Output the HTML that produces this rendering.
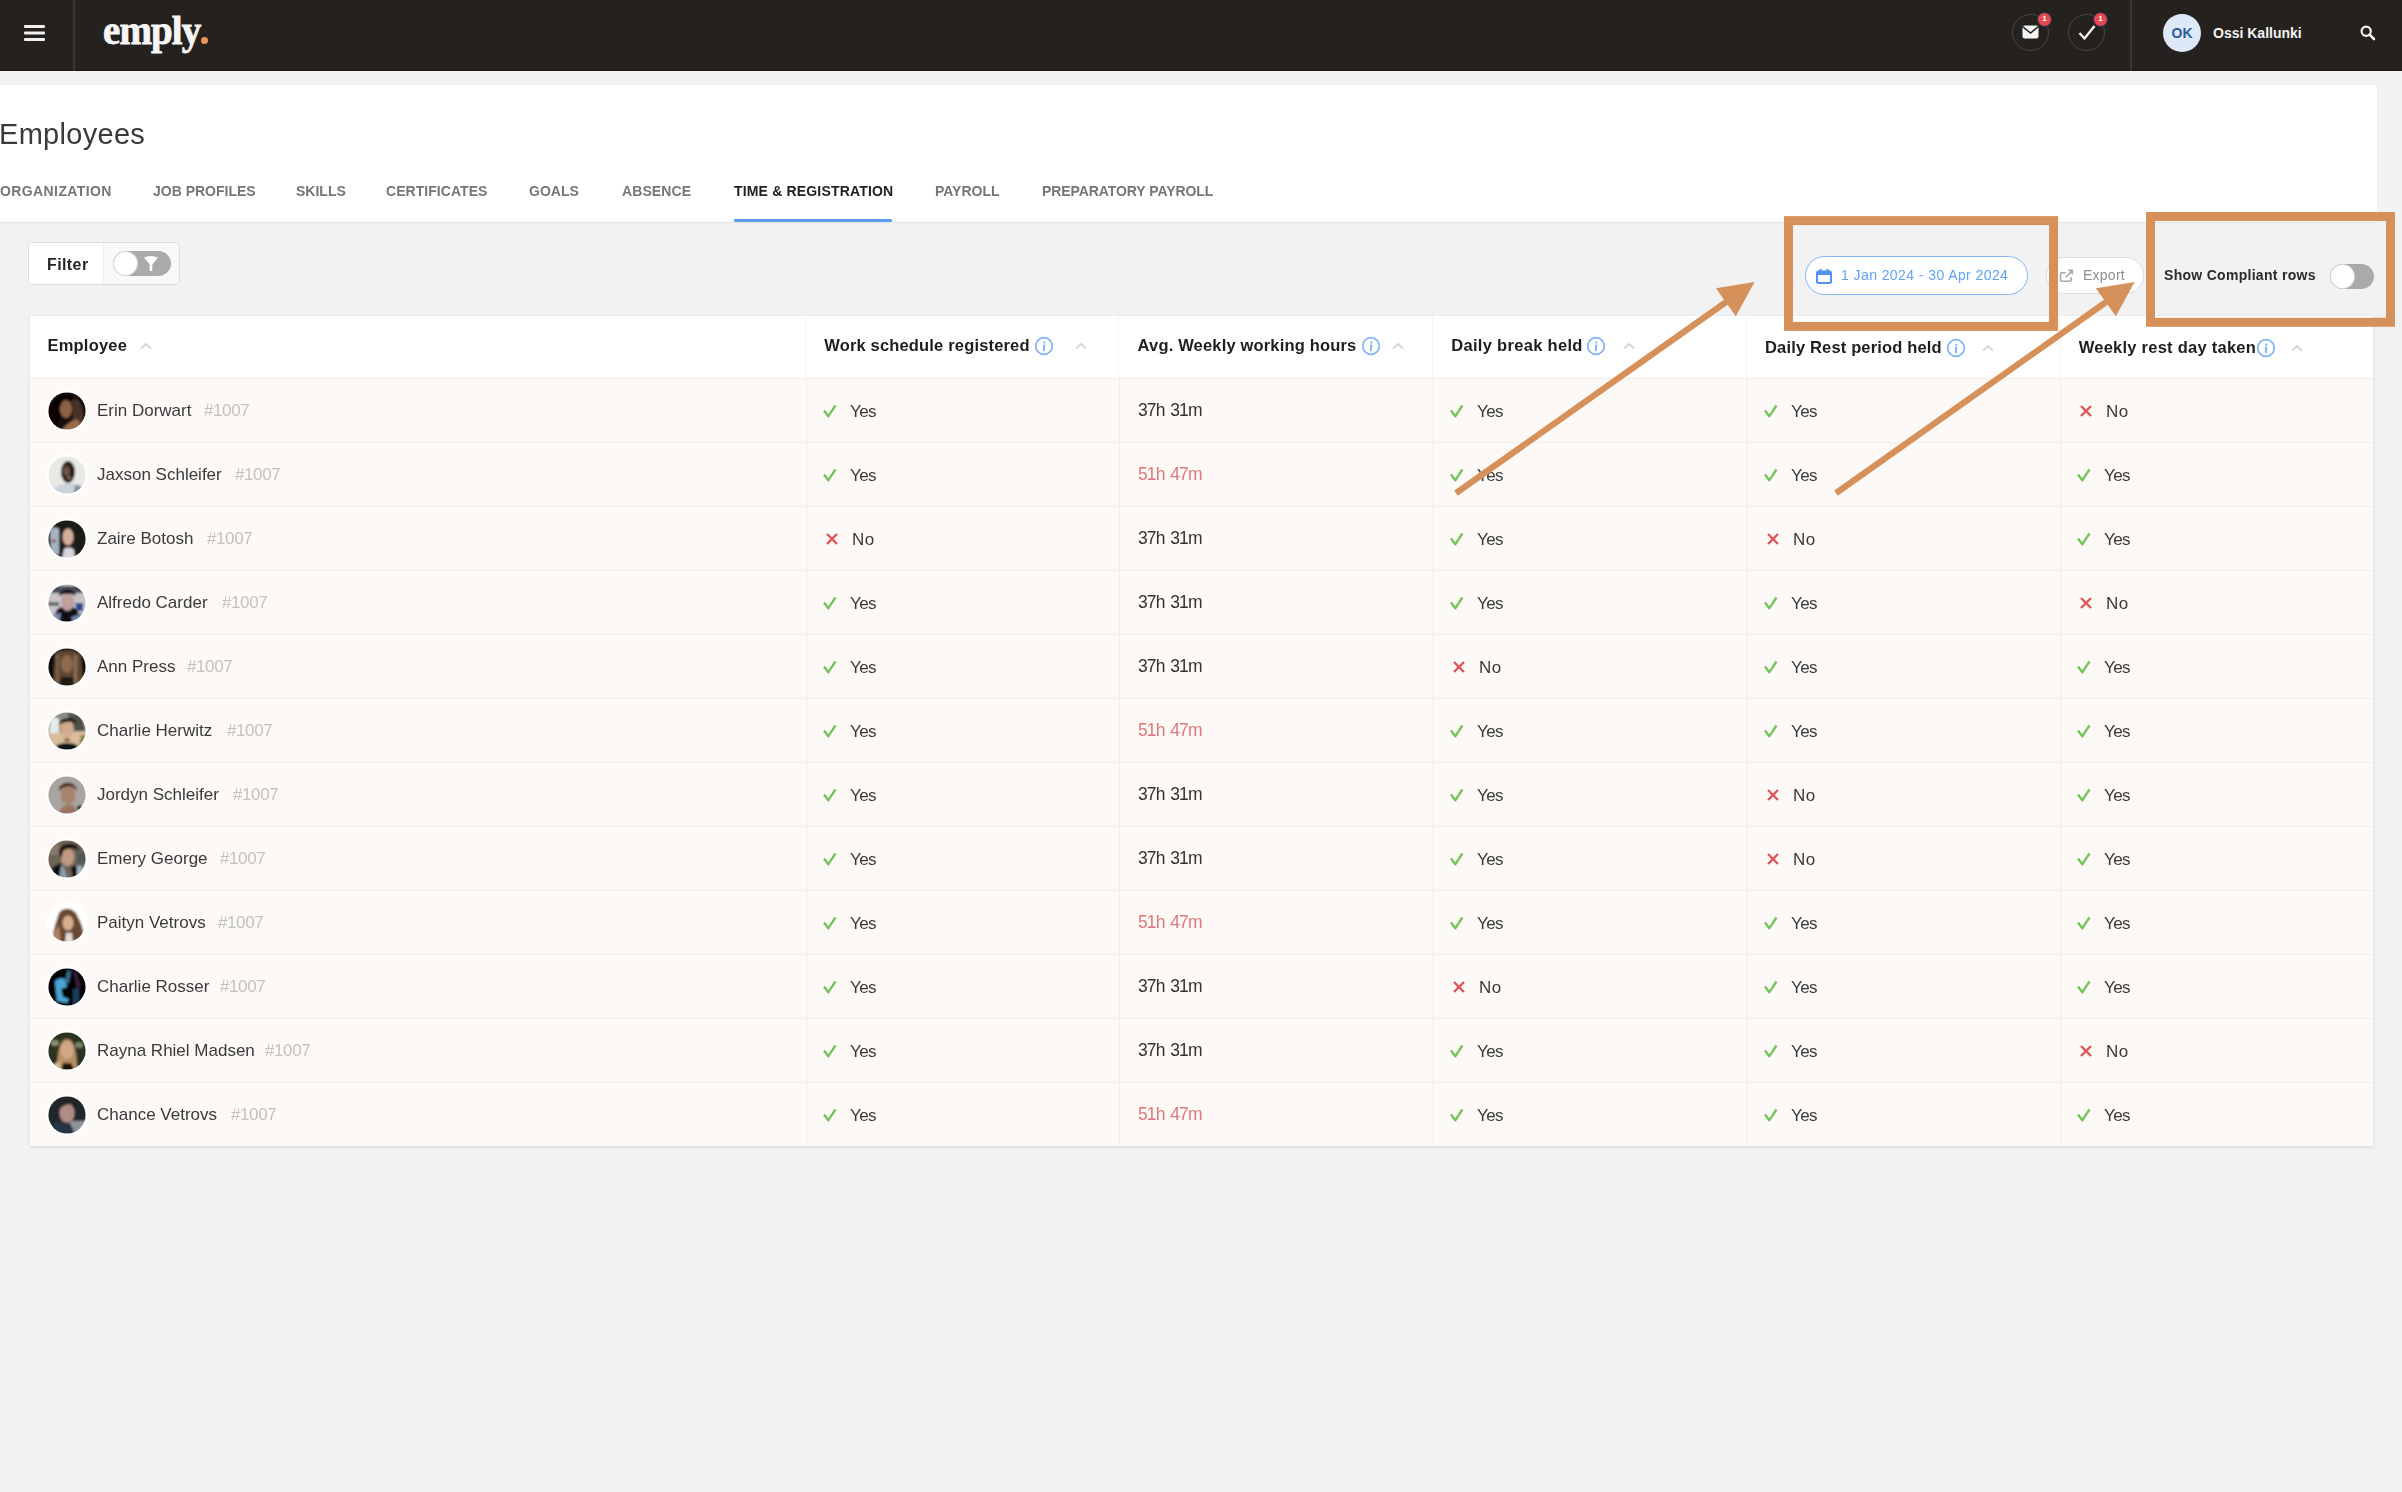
<!DOCTYPE html>
<html><head><meta charset="utf-8"><title>Employees</title>
<style>
*{box-sizing:border-box;margin:0;padding:0}
html,body{width:2402px;height:1492px;overflow:hidden;background:#f2f2f2;font-family:"Liberation Sans",sans-serif;color:#333}
.abs{position:absolute}
#top{position:absolute;left:0;top:0;width:2402px;height:71px;background:#25211e;border-bottom:2px solid #1f1a17}
#panel{position:absolute;left:0;top:84.5px;width:2377px;height:137px;background:#fff;box-shadow:0 1px 1px rgba(0,0,0,.06)}
.title{position:absolute;left:-1px;top:114px;font-size:29px;color:#3a3a3a;line-height:40px;letter-spacing:0.3px}
.tab{position:absolute;top:182px;font-size:14px;font-weight:bold;color:#767676;line-height:18px;white-space:nowrap;transform-origin:0 0}
.tab.act{color:#1f1f1f}
#uline{position:absolute;left:734px;top:218.5px;width:158px;height:3px;background:#5a9cf2;border-radius:1px}
#filter{position:absolute;left:28px;top:242px;width:152px;height:43px;border:1.5px solid #dcdcdc;border-radius:5px;background:#f9f9f9;overflow:hidden}
#filter .l{position:absolute;left:0;top:0;width:75px;height:100%;background:#fff;border-right:1px solid #f0f0f0}
#filter .t{position:absolute;left:18px;top:12px;font-size:16px;font-weight:bold;color:#262626;line-height:20px;letter-spacing:0.4px}
.tog{position:absolute;background:#aaaaaa;border-radius:13px}
.knob{position:absolute;background:#fff;border-radius:50%;box-shadow:0 0 0 1px #d8d8d8}
#date{position:absolute;left:1805px;top:256px;width:223px;height:39px;border:1.8px solid #85b5f4;border-radius:20px;background:#fff}
#date .t{position:absolute;left:35px;top:8.5px;font-size:14px;color:#64a2f1;line-height:18px;white-space:nowrap;letter-spacing:0.42px}
#export{position:absolute;left:2046px;top:256.5px;width:98px;height:37.5px;border:1.5px solid #e0e0e0;border-radius:19px;background:#fff;box-shadow:0 0 1px rgba(0,0,0,.08)}
#export .t{position:absolute;left:36px;top:8px;font-size:14px;color:#8e8e8e;line-height:18px;letter-spacing:0.25px}
.scr{position:absolute;left:2164px;top:265.5px;font-size:14px;font-weight:bold;color:#2a2a2a;line-height:18px;white-space:nowrap;letter-spacing:0.29px}
#table{position:absolute;left:30px;top:316px;width:2343px;height:830px;background:#fff;box-shadow:0 1px 3px rgba(0,0,0,.12)}
.row{position:absolute;left:30px;width:2343px;height:64px;background:#fdf9f6;border-top:1.5px solid #f0efee}
.vline{position:absolute;top:378px;width:1.3px;height:768px;background:#efedec}
.vline.h{top:316px;height:62px;background:#f4f4f4}
.th{position:absolute;font-size:16.5px;font-weight:bold;color:#1e1e1e;line-height:20px;white-space:nowrap}
.info,.chev{position:absolute;line-height:0}
.name{position:absolute;left:97px;font-size:17px;color:#3a3a3a;line-height:64px;white-space:nowrap;padding-top:0.5px}
.eid{position:absolute;font-size:17px;color:#c2c2c2;line-height:64px;white-space:nowrap;letter-spacing:-0.4px;padding-top:0.5px}
.cell{position:absolute;height:64px;white-space:nowrap}
.cell .ic{position:absolute;left:-1px;top:25px}
.cell .ic.x{left:1px;top:24.5px}
.cell .yn{position:absolute;left:27px;top:1.5px;font-size:17px;color:#3a3a3a;line-height:64px;letter-spacing:-0.6px}
.cell .yn.no{left:29px;letter-spacing:0.5px}
.hrs{position:absolute;font-size:17.5px;color:#333;line-height:64px;white-space:nowrap;letter-spacing:-0.9px;word-spacing:1.8px;padding-top:0px}
.hrs.red{color:#e0777a}
#ann{position:absolute;left:0;top:0;width:2402px;height:1492px;pointer-events:none}
</style></head><body>
<div id="wrap" style="position:absolute;left:0;top:0;width:2402px;height:1492px;overflow:hidden;filter:blur(0.5px)">
<svg width="0" height="0" style="position:absolute"><defs><filter id="bl" x="-10%" y="-10%" width="120%" height="120%"><feGaussianBlur stdDeviation="0.9"/></filter></defs></svg>
<div id="top">
  <svg class="abs" style="left:24px;top:25px" width="22" height="17" viewBox="0 0 22 17"><rect x="0" y="0" width="21" height="3" rx="1" fill="#f0f0f0"/><rect x="0" y="6.5" width="21" height="3" rx="1" fill="#f0f0f0"/><rect x="0" y="13" width="21" height="3" rx="1" fill="#f0f0f0"/></svg>
  <div class="abs" style="left:73px;top:0;width:1.5px;height:71px;background:#3a3634"></div>
  <div class="abs" style="left:103px;top:6px;font-family:'Liberation Serif',serif;font-weight:bold;font-size:39px;color:#f6f6f6;line-height:50px;letter-spacing:-0.9px;-webkit-text-stroke:0.8px #f6f6f6">emply</div>
  <div class="abs" style="left:201px;top:37px;width:7px;height:7px;border-radius:50%;background:#e8965a"></div>
  <div class="abs" style="left:2012px;top:14px;width:37px;height:37px;border:1px solid #4a4644;border-radius:50%"></div>
  <svg class="abs" style="left:2022px;top:25px" width="17" height="14" viewBox="0 0 17 14"><rect x="0.5" y="0.5" width="16" height="13" rx="2" fill="#f4f4f4"/><path d="M0.5 1.5 L8.5 8 L16.5 1.5" fill="none" stroke="#231f1d" stroke-width="1.6"/></svg>
  <div class="abs" style="left:2037px;top:12px;width:15px;height:15px;border-radius:50%;background:#e5484d;border:1.5px solid #1d2f55;color:#fff;font-size:8px;line-height:12px;text-align:center;font-weight:bold">1</div>
  <div class="abs" style="left:2068px;top:14px;width:37px;height:37px;border:1px solid #4a4644;border-radius:50%"></div>
  <svg class="abs" style="left:2078px;top:24px" width="18" height="17" viewBox="0 0 18 17"><path d="M1.5 9 L6.5 14.5 L16.5 2" fill="none" stroke="#f4f4f4" stroke-width="2.4"/></svg>
  <div class="abs" style="left:2093px;top:12px;width:15px;height:15px;border-radius:50%;background:#e5484d;border:1.5px solid #1d2f55;color:#fff;font-size:8px;line-height:12px;text-align:center;font-weight:bold">1</div>
  <div class="abs" style="left:2130px;top:0;width:1.5px;height:71px;background:#3a3634"></div>
  <div class="abs" style="left:2163px;top:14px;width:38px;height:38px;border-radius:50%;background:#dde9f7;color:#2d5a98;font-weight:bold;font-size:14px;line-height:38px;text-align:center">OK</div>
  <div class="abs" style="left:2213px;top:24px;font-weight:bold;font-size:14px;color:#f4f4f4;line-height:18px;white-space:nowrap">Ossi Kallunki</div>
  <svg class="abs" style="left:2360px;top:25px" width="16" height="16" viewBox="0 0 16 16"><circle cx="6.2" cy="6.2" r="4.6" fill="none" stroke="#f4f4f4" stroke-width="2.2"/><path d="M9.6 9.6 L14 14" stroke="#f4f4f4" stroke-width="2.6" stroke-linecap="round"/></svg>
</div>
<div id="panel"></div>
<div class="title">Employees</div>
<div class="tab" style="left:0px;letter-spacing:0.4px">ORGANIZATION</div><div class="tab" style="left:153px;letter-spacing:0px">JOB PROFILES</div><div class="tab" style="left:296px;letter-spacing:0px">SKILLS</div><div class="tab" style="left:386px;letter-spacing:0.05px">CERTIFICATES</div><div class="tab" style="left:529px;letter-spacing:0px">GOALS</div><div class="tab" style="left:622px;letter-spacing:0.1px">ABSENCE</div><div class="tab act" style="left:734px;letter-spacing:0.17px">TIME &amp; REGISTRATION</div><div class="tab" style="left:935px;letter-spacing:0px">PAYROLL</div><div class="tab" style="left:1042px;letter-spacing:-0.08px">PREPARATORY PAYROLL</div>
<div id="uline"></div>
<div id="filter"><div class="l"></div><div class="t">Filter</div>
  <div class="tog" style="left:84px;top:8px;width:58px;height:25px"></div>
  <div class="knob" style="left:85px;top:9px;width:23px;height:23px"></div>
  <svg class="abs" style="left:114px;top:12px" width="16" height="17" viewBox="0 0 16 17"><path d="M1 2.5 Q8 -0.5 15 2.5 L9.3 9.5 V16 H6.7 V9.5 Z" fill="#fff"/></svg>
</div>
<div id="date"><svg class="abs" style="left:10px;top:12px" width="16" height="15" viewBox="0 0 16 15"><rect x="1" y="2.5" width="14" height="11.5" rx="1.5" fill="none" stroke="#4f93ee" stroke-width="2"/><rect x="1" y="2.5" width="14" height="3.5" fill="#4f93ee"/><rect x="3.5" y="0" width="2" height="3" fill="#4f93ee"/><rect x="10.5" y="0" width="2" height="3" fill="#4f93ee"/></svg><div class="t">1 Jan 2024 - 30 Apr 2024</div></div>
<div id="export"><svg class="abs" style="left:11.5px;top:10.5px" width="15" height="15" viewBox="0 0 15 15"><path d="M6.5 4.8 H3.2 Q1.5 4.8 1.5 6.5 V11.6 Q1.5 13.3 3.2 13.3 H10.4 Q12.1 13.3 12.1 11.6 V9.2" fill="none" stroke="#a6a6a6" stroke-width="1.6"/><path d="M6.8 9.2 L12.6 3.2 M9.4 2.4 H13.2 V6.2" fill="none" stroke="#a6a6a6" stroke-width="1.6"/></svg><div class="t">Export</div></div></div>
<div class="scr">Show Compliant rows</div>
<div class="tog" style="left:2330px;top:264px;width:44px;height:25px"></div>
<div class="knob" style="left:2331px;top:265px;width:23px;height:23px"></div>
<div id="table"></div>
<div class="row" style="top:378px"></div><div style="position:absolute;left:46px;top:389.7px;line-height:0"><svg class="av" width="42" height="42" viewBox="-1 -1 42 42"><defs><clipPath id="c0"><circle cx="20" cy="20" r="18.6"/></clipPath></defs><circle cx="20" cy="20" r="20.6" fill="#fff"/><g clip-path="url(#c0)"><g filter="url(#bl)"><rect width="40" height="40" fill="#120d0b"/>
<path d="M22 4 C34 6 38 18 36 40 L22 40 C26 30 28 18 22 4 Z" fill="#4a3226"/>
<path d="M8 8 C14 2 26 2 30 8 C24 8 18 12 14 22 C12 30 10 36 8 40 L2 40 L2 20 Z" fill="#080605"/>
<ellipse cx="19" cy="18" rx="6" ry="9" fill="#8c6446"/>
<path d="M14 40 C18 34 24 30 30 28 C34 32 36 36 36 40 Z" fill="#9a6c4c"/></g></g></svg></div><div class="name" style="top:378px">Erin Dorwart</div><div class="eid" style="left:204px;top:378px">#1007</div><div class="cell" style="left:823px;top:378px"><svg class="ic" width="16" height="16" viewBox="0 0 16 16"><path d="M2 7.5 L6.3 13.3 L13.4 2.5" fill="none" stroke="#72c45a" stroke-width="2.3" stroke-linejoin="round"/></svg><span class="yn">Yes</span></div><div class="hrs" style="left:1138px;top:378px">37h 31m</div><div class="cell" style="left:1450px;top:378px"><svg class="ic" width="16" height="16" viewBox="0 0 16 16"><path d="M2 7.5 L6.3 13.3 L13.4 2.5" fill="none" stroke="#72c45a" stroke-width="2.3" stroke-linejoin="round"/></svg><span class="yn">Yes</span></div><div class="cell" style="left:1764px;top:378px"><svg class="ic" width="16" height="16" viewBox="0 0 16 16"><path d="M2 7.5 L6.3 13.3 L13.4 2.5" fill="none" stroke="#72c45a" stroke-width="2.3" stroke-linejoin="round"/></svg><span class="yn">Yes</span></div><div class="cell" style="left:2077px;top:378px"><svg class="ic x" width="16" height="16" viewBox="0 0 16 16"><path d="M3 3 L13 13 M13 3 L3 13" fill="none" stroke="#e25252" stroke-width="2.3"/></svg><span class="yn no">No</span></div><div class="row" style="top:442px"></div><div style="position:absolute;left:46px;top:453.7px;line-height:0"><svg class="av" width="42" height="42" viewBox="-1 -1 42 42"><defs><clipPath id="c1"><circle cx="20" cy="20" r="18.6"/></clipPath></defs><circle cx="20" cy="20" r="20.6" fill="#fff"/><g clip-path="url(#c1)"><g filter="url(#bl)"><rect width="40" height="40" fill="#e9e9e7"/>
<ellipse cx="23" cy="37" rx="18" ry="9" fill="#cdd3dc"/>
<path d="M28 30 C34 30 40 34 40 40 L26 40 Z" fill="#8a92a0"/>
<ellipse cx="21" cy="17" rx="7" ry="11" fill="#2a1f18"/>
<ellipse cx="19.5" cy="16" rx="3.5" ry="5" fill="#6e5444"/>
<ellipse cx="22" cy="22.5" rx="2.5" ry="1.5" fill="#8a6860"/></g></g></svg></div><div class="name" style="top:442px">Jaxson Schleifer</div><div class="eid" style="left:235px;top:442px">#1007</div><div class="cell" style="left:823px;top:442px"><svg class="ic" width="16" height="16" viewBox="0 0 16 16"><path d="M2 7.5 L6.3 13.3 L13.4 2.5" fill="none" stroke="#72c45a" stroke-width="2.3" stroke-linejoin="round"/></svg><span class="yn">Yes</span></div><div class="hrs red" style="left:1138px;top:442px">51h 47m</div><div class="cell" style="left:1450px;top:442px"><svg class="ic" width="16" height="16" viewBox="0 0 16 16"><path d="M2 7.5 L6.3 13.3 L13.4 2.5" fill="none" stroke="#72c45a" stroke-width="2.3" stroke-linejoin="round"/></svg><span class="yn">Yes</span></div><div class="cell" style="left:1764px;top:442px"><svg class="ic" width="16" height="16" viewBox="0 0 16 16"><path d="M2 7.5 L6.3 13.3 L13.4 2.5" fill="none" stroke="#72c45a" stroke-width="2.3" stroke-linejoin="round"/></svg><span class="yn">Yes</span></div><div class="cell" style="left:2077px;top:442px"><svg class="ic" width="16" height="16" viewBox="0 0 16 16"><path d="M2 7.5 L6.3 13.3 L13.4 2.5" fill="none" stroke="#72c45a" stroke-width="2.3" stroke-linejoin="round"/></svg><span class="yn">Yes</span></div><div class="row" style="top:506px"></div><div style="position:absolute;left:46px;top:517.7px;line-height:0"><svg class="av" width="42" height="42" viewBox="-1 -1 42 42"><defs><clipPath id="c2"><circle cx="20" cy="20" r="18.6"/></clipPath></defs><circle cx="20" cy="20" r="20.6" fill="#fff"/><g clip-path="url(#c2)"><g filter="url(#bl)"><rect width="40" height="40" fill="#1c1a18"/>
<path d="M3 10 C6 8 10 8 12 10 L12 36 L4 34 Z" fill="#a6b4c4"/>
<ellipse cx="7" cy="22" rx="2" ry="1.5" fill="#903040"/>
<ellipse cx="21" cy="18" rx="5.5" ry="8.5" fill="#d4ae9c"/>
<path d="M15 40 L17 30 C20 28 24 28 27 31 L28 40 Z" fill="#dcd6e0"/></g></g></svg></div><div class="name" style="top:506px">Zaire Botosh</div><div class="eid" style="left:207px;top:506px">#1007</div><div class="cell" style="left:823px;top:506px"><svg class="ic x" width="16" height="16" viewBox="0 0 16 16"><path d="M3 3 L13 13 M13 3 L3 13" fill="none" stroke="#e25252" stroke-width="2.3"/></svg><span class="yn no">No</span></div><div class="hrs" style="left:1138px;top:506px">37h 31m</div><div class="cell" style="left:1450px;top:506px"><svg class="ic" width="16" height="16" viewBox="0 0 16 16"><path d="M2 7.5 L6.3 13.3 L13.4 2.5" fill="none" stroke="#72c45a" stroke-width="2.3" stroke-linejoin="round"/></svg><span class="yn">Yes</span></div><div class="cell" style="left:1764px;top:506px"><svg class="ic x" width="16" height="16" viewBox="0 0 16 16"><path d="M3 3 L13 13 M13 3 L3 13" fill="none" stroke="#e25252" stroke-width="2.3"/></svg><span class="yn no">No</span></div><div class="cell" style="left:2077px;top:506px"><svg class="ic" width="16" height="16" viewBox="0 0 16 16"><path d="M2 7.5 L6.3 13.3 L13.4 2.5" fill="none" stroke="#72c45a" stroke-width="2.3" stroke-linejoin="round"/></svg><span class="yn">Yes</span></div><div class="row" style="top:570px"></div><div style="position:absolute;left:46px;top:581.7px;line-height:0"><svg class="av" width="42" height="42" viewBox="-1 -1 42 42"><defs><clipPath id="c3"><circle cx="20" cy="20" r="18.6"/></clipPath></defs><circle cx="20" cy="20" r="20.6" fill="#fff"/><g clip-path="url(#c3)"><g filter="url(#bl)"><rect width="40" height="40" fill="#c8c4c8"/>
<rect x="0" y="3" width="40" height="7" fill="#4a4e58"/>
<rect x="0" y="19" width="12" height="4" fill="#6a6a66"/>
<path d="M28 20 L36 20 L36 28 L30 28 Z" fill="#2a4890"/>
<path d="M6 40 C8 26 12 22 20 25 C28 22 32 26 34 40 Z" fill="#0e0e14"/>
<path d="M4 32 L14 30 L12 40 L2 40 Z" fill="#7a90b0"/>
<path d="M24 34 L36 30 L38 40 L26 40 Z" fill="#6a84a8"/>
<ellipse cx="20.5" cy="19" rx="6.5" ry="9" fill="#bf9e9c"/>
<path d="M12 13 C12 5 28 4 29 13 C25 10 17 10 12 13 Z" fill="#101012"/></g></g></svg></div><div class="name" style="top:570px">Alfredo Carder</div><div class="eid" style="left:222px;top:570px">#1007</div><div class="cell" style="left:823px;top:570px"><svg class="ic" width="16" height="16" viewBox="0 0 16 16"><path d="M2 7.5 L6.3 13.3 L13.4 2.5" fill="none" stroke="#72c45a" stroke-width="2.3" stroke-linejoin="round"/></svg><span class="yn">Yes</span></div><div class="hrs" style="left:1138px;top:570px">37h 31m</div><div class="cell" style="left:1450px;top:570px"><svg class="ic" width="16" height="16" viewBox="0 0 16 16"><path d="M2 7.5 L6.3 13.3 L13.4 2.5" fill="none" stroke="#72c45a" stroke-width="2.3" stroke-linejoin="round"/></svg><span class="yn">Yes</span></div><div class="cell" style="left:1764px;top:570px"><svg class="ic" width="16" height="16" viewBox="0 0 16 16"><path d="M2 7.5 L6.3 13.3 L13.4 2.5" fill="none" stroke="#72c45a" stroke-width="2.3" stroke-linejoin="round"/></svg><span class="yn">Yes</span></div><div class="cell" style="left:2077px;top:570px"><svg class="ic x" width="16" height="16" viewBox="0 0 16 16"><path d="M3 3 L13 13 M13 3 L3 13" fill="none" stroke="#e25252" stroke-width="2.3"/></svg><span class="yn no">No</span></div><div class="row" style="top:634px"></div><div style="position:absolute;left:46px;top:645.7px;line-height:0"><svg class="av" width="42" height="42" viewBox="-1 -1 42 42"><defs><clipPath id="c4"><circle cx="20" cy="20" r="18.6"/></clipPath></defs><circle cx="20" cy="20" r="20.6" fill="#fff"/><g clip-path="url(#c4)"><g filter="url(#bl)"><rect width="40" height="40" fill="#100c08"/>
<path d="M8 6 C14 2 28 2 34 8 L36 40 L6 40 Z" fill="#5e4632"/>
<rect x="9" y="8" width="3" height="30" fill="#7a6048"/>
<rect x="27" y="8" width="3" height="30" fill="#8a7058"/>
<ellipse cx="20" cy="17" rx="6" ry="9" fill="#8c6a50"/>
<path d="M14 30 L26 30 L28 40 L12 40 Z" fill="#221a12"/></g></g></svg></div><div class="name" style="top:634px">Ann Press</div><div class="eid" style="left:187px;top:634px">#1007</div><div class="cell" style="left:823px;top:634px"><svg class="ic" width="16" height="16" viewBox="0 0 16 16"><path d="M2 7.5 L6.3 13.3 L13.4 2.5" fill="none" stroke="#72c45a" stroke-width="2.3" stroke-linejoin="round"/></svg><span class="yn">Yes</span></div><div class="hrs" style="left:1138px;top:634px">37h 31m</div><div class="cell" style="left:1450px;top:634px"><svg class="ic x" width="16" height="16" viewBox="0 0 16 16"><path d="M3 3 L13 13 M13 3 L3 13" fill="none" stroke="#e25252" stroke-width="2.3"/></svg><span class="yn no">No</span></div><div class="cell" style="left:1764px;top:634px"><svg class="ic" width="16" height="16" viewBox="0 0 16 16"><path d="M2 7.5 L6.3 13.3 L13.4 2.5" fill="none" stroke="#72c45a" stroke-width="2.3" stroke-linejoin="round"/></svg><span class="yn">Yes</span></div><div class="cell" style="left:2077px;top:634px"><svg class="ic" width="16" height="16" viewBox="0 0 16 16"><path d="M2 7.5 L6.3 13.3 L13.4 2.5" fill="none" stroke="#72c45a" stroke-width="2.3" stroke-linejoin="round"/></svg><span class="yn">Yes</span></div><div class="row" style="top:698px"></div><div style="position:absolute;left:46px;top:709.7px;line-height:0"><svg class="av" width="42" height="42" viewBox="-1 -1 42 42"><defs><clipPath id="c5"><circle cx="20" cy="20" r="18.6"/></clipPath></defs><circle cx="20" cy="20" r="20.6" fill="#fff"/><g clip-path="url(#c5)"><g filter="url(#bl)"><rect width="40" height="40" fill="#d8bc9c"/>
<path d="M0 0 L40 0 L40 20 L0 22 Z" fill="#8c8c80"/>
<path d="M20 2 L34 4 L38 20 L28 20 Z" fill="#505048"/>
<path d="M4 8 C6 6 10 6 12 8 L12 22 L2 22 Z" fill="#e8ece8"/>
<path d="M34 24 L40 24 L40 36 L32 36 Z" fill="#8a8448"/>
<path d="M8 40 C8 34 12 32 20 32 C28 32 32 34 32 40 Z" fill="#0e1216"/>
<ellipse cx="20" cy="17" rx="6.5" ry="9" fill="#d2aa8c"/>
<path d="M12 14 C12 6 28 4 30 13 C26 10 18 10 12 14 Z" fill="#1e1a18"/>
<ellipse cx="20" cy="29" rx="3" ry="2" fill="#8a6840"/></g></g></svg></div><div class="name" style="top:698px">Charlie Herwitz</div><div class="eid" style="left:227px;top:698px">#1007</div><div class="cell" style="left:823px;top:698px"><svg class="ic" width="16" height="16" viewBox="0 0 16 16"><path d="M2 7.5 L6.3 13.3 L13.4 2.5" fill="none" stroke="#72c45a" stroke-width="2.3" stroke-linejoin="round"/></svg><span class="yn">Yes</span></div><div class="hrs red" style="left:1138px;top:698px">51h 47m</div><div class="cell" style="left:1450px;top:698px"><svg class="ic" width="16" height="16" viewBox="0 0 16 16"><path d="M2 7.5 L6.3 13.3 L13.4 2.5" fill="none" stroke="#72c45a" stroke-width="2.3" stroke-linejoin="round"/></svg><span class="yn">Yes</span></div><div class="cell" style="left:1764px;top:698px"><svg class="ic" width="16" height="16" viewBox="0 0 16 16"><path d="M2 7.5 L6.3 13.3 L13.4 2.5" fill="none" stroke="#72c45a" stroke-width="2.3" stroke-linejoin="round"/></svg><span class="yn">Yes</span></div><div class="cell" style="left:2077px;top:698px"><svg class="ic" width="16" height="16" viewBox="0 0 16 16"><path d="M2 7.5 L6.3 13.3 L13.4 2.5" fill="none" stroke="#72c45a" stroke-width="2.3" stroke-linejoin="round"/></svg><span class="yn">Yes</span></div><div class="row" style="top:762px"></div><div style="position:absolute;left:46px;top:773.7px;line-height:0"><svg class="av" width="42" height="42" viewBox="-1 -1 42 42"><defs><clipPath id="c6"><circle cx="20" cy="20" r="18.6"/></clipPath></defs><circle cx="20" cy="20" r="20.6" fill="#fff"/><g clip-path="url(#c6)"><g filter="url(#bl)"><rect width="40" height="40" fill="#a8a5a1"/>
<path d="M12 40 C12 34 16 30 22 30 C28 30 30 34 30 40 Z" fill="#9a7462"/>
<ellipse cx="21" cy="20" rx="7.5" ry="10" fill="#a88470"/>
<path d="M12 16 C10 6 30 4 30 16 C28 12 22 10 18 12 C16 12 14 14 12 16 Z" fill="#4a2e1c"/>
<ellipse cx="33" cy="33" rx="3" ry="2.5" fill="#181210"/></g></g></svg></div><div class="name" style="top:762px">Jordyn Schleifer</div><div class="eid" style="left:233px;top:762px">#1007</div><div class="cell" style="left:823px;top:762px"><svg class="ic" width="16" height="16" viewBox="0 0 16 16"><path d="M2 7.5 L6.3 13.3 L13.4 2.5" fill="none" stroke="#72c45a" stroke-width="2.3" stroke-linejoin="round"/></svg><span class="yn">Yes</span></div><div class="hrs" style="left:1138px;top:762px">37h 31m</div><div class="cell" style="left:1450px;top:762px"><svg class="ic" width="16" height="16" viewBox="0 0 16 16"><path d="M2 7.5 L6.3 13.3 L13.4 2.5" fill="none" stroke="#72c45a" stroke-width="2.3" stroke-linejoin="round"/></svg><span class="yn">Yes</span></div><div class="cell" style="left:1764px;top:762px"><svg class="ic x" width="16" height="16" viewBox="0 0 16 16"><path d="M3 3 L13 13 M13 3 L3 13" fill="none" stroke="#e25252" stroke-width="2.3"/></svg><span class="yn no">No</span></div><div class="cell" style="left:2077px;top:762px"><svg class="ic" width="16" height="16" viewBox="0 0 16 16"><path d="M2 7.5 L6.3 13.3 L13.4 2.5" fill="none" stroke="#72c45a" stroke-width="2.3" stroke-linejoin="round"/></svg><span class="yn">Yes</span></div><div class="row" style="top:826px"></div><div style="position:absolute;left:46px;top:837.7px;line-height:0"><svg class="av" width="42" height="42" viewBox="-1 -1 42 42"><defs><clipPath id="c7"><circle cx="20" cy="20" r="18.6"/></clipPath></defs><circle cx="20" cy="20" r="20.6" fill="#fff"/><g clip-path="url(#c7)"><g filter="url(#bl)"><rect width="40" height="40" fill="#6c6454"/>
<rect x="0" y="4" width="12" height="12" fill="#8a7868"/>
<rect x="30" y="14" width="10" height="10" fill="#4c5a58"/>
<path d="M4 40 L6 28 L14 24 L16 40 Z" fill="#0c0c10"/>
<path d="M26 40 L24 28 L32 26 L36 40 Z" fill="#0c0c10"/>
<path d="M12 40 L14 26 L18 30 L20 40 Z" fill="#8a9cac"/>
<path d="M30 26 L36 28 L34 40 L30 40 Z" fill="#a0b0bc"/>
<ellipse cx="20.5" cy="18" rx="7" ry="9" fill="#c09a82"/>
<path d="M12 14 C12 2 32 2 32 12 C28 9 22 8 16 12 L14 20 Z" fill="#140e0c"/></g></g></svg></div><div class="name" style="top:826px">Emery George</div><div class="eid" style="left:220px;top:826px">#1007</div><div class="cell" style="left:823px;top:826px"><svg class="ic" width="16" height="16" viewBox="0 0 16 16"><path d="M2 7.5 L6.3 13.3 L13.4 2.5" fill="none" stroke="#72c45a" stroke-width="2.3" stroke-linejoin="round"/></svg><span class="yn">Yes</span></div><div class="hrs" style="left:1138px;top:826px">37h 31m</div><div class="cell" style="left:1450px;top:826px"><svg class="ic" width="16" height="16" viewBox="0 0 16 16"><path d="M2 7.5 L6.3 13.3 L13.4 2.5" fill="none" stroke="#72c45a" stroke-width="2.3" stroke-linejoin="round"/></svg><span class="yn">Yes</span></div><div class="cell" style="left:1764px;top:826px"><svg class="ic x" width="16" height="16" viewBox="0 0 16 16"><path d="M3 3 L13 13 M13 3 L3 13" fill="none" stroke="#e25252" stroke-width="2.3"/></svg><span class="yn no">No</span></div><div class="cell" style="left:2077px;top:826px"><svg class="ic" width="16" height="16" viewBox="0 0 16 16"><path d="M2 7.5 L6.3 13.3 L13.4 2.5" fill="none" stroke="#72c45a" stroke-width="2.3" stroke-linejoin="round"/></svg><span class="yn">Yes</span></div><div class="row" style="top:890px"></div><div style="position:absolute;left:46px;top:901.7px;line-height:0"><svg class="av" width="42" height="42" viewBox="-1 -1 42 42"><defs><clipPath id="c8"><circle cx="20" cy="20" r="18.6"/></clipPath></defs><circle cx="20" cy="20" r="20.6" fill="#fff"/><g clip-path="url(#c8)"><g filter="url(#bl)"><rect width="40" height="40" fill="#ffffff"/>
<path d="M12 10 C16 4 26 4 30 12 C34 20 38 28 36 36 L26 40 L12 40 L6 34 C6 28 8 22 12 10 Z" fill="#6a4630"/>
<path d="M6 34 C8 28 10 24 12 22 L14 40 L6 40 Z" fill="#b08060"/>
<ellipse cx="21" cy="20" rx="5.5" ry="7.5" fill="#d8ae90"/>
<path d="M18 40 L19 30 L25 30 L26 40 Z" fill="#e4dcdc"/></g></g></svg></div><div class="name" style="top:890px">Paityn Vetrovs</div><div class="eid" style="left:218px;top:890px">#1007</div><div class="cell" style="left:823px;top:890px"><svg class="ic" width="16" height="16" viewBox="0 0 16 16"><path d="M2 7.5 L6.3 13.3 L13.4 2.5" fill="none" stroke="#72c45a" stroke-width="2.3" stroke-linejoin="round"/></svg><span class="yn">Yes</span></div><div class="hrs red" style="left:1138px;top:890px">51h 47m</div><div class="cell" style="left:1450px;top:890px"><svg class="ic" width="16" height="16" viewBox="0 0 16 16"><path d="M2 7.5 L6.3 13.3 L13.4 2.5" fill="none" stroke="#72c45a" stroke-width="2.3" stroke-linejoin="round"/></svg><span class="yn">Yes</span></div><div class="cell" style="left:1764px;top:890px"><svg class="ic" width="16" height="16" viewBox="0 0 16 16"><path d="M2 7.5 L6.3 13.3 L13.4 2.5" fill="none" stroke="#72c45a" stroke-width="2.3" stroke-linejoin="round"/></svg><span class="yn">Yes</span></div><div class="cell" style="left:2077px;top:890px"><svg class="ic" width="16" height="16" viewBox="0 0 16 16"><path d="M2 7.5 L6.3 13.3 L13.4 2.5" fill="none" stroke="#72c45a" stroke-width="2.3" stroke-linejoin="round"/></svg><span class="yn">Yes</span></div><div class="row" style="top:954px"></div><div style="position:absolute;left:46px;top:965.7px;line-height:0"><svg class="av" width="42" height="42" viewBox="-1 -1 42 42"><defs><clipPath id="c9"><circle cx="20" cy="20" r="18.6"/></clipPath></defs><circle cx="20" cy="20" r="20.6" fill="#fff"/><g clip-path="url(#c9)"><g filter="url(#bl)"><rect width="40" height="40" fill="#040406"/>
<path d="M8 16 C8 12 14 10 18 12 L20 20 L14 22 L16 30 L22 32 L20 36 L10 34 Z" fill="#4aa6d6"/>
<path d="M20 4 L24 4 L22 16 L18 16 Z" fill="#3a6a8a"/>
<path d="M26 22 L32 20 L32 34 L26 38 Z" fill="#1a3c58"/>
<path d="M26 4 L30 6 L34 20 L30 22 Z" fill="#3a1a3a"/></g></g></svg></div><div class="name" style="top:954px">Charlie Rosser</div><div class="eid" style="left:220px;top:954px">#1007</div><div class="cell" style="left:823px;top:954px"><svg class="ic" width="16" height="16" viewBox="0 0 16 16"><path d="M2 7.5 L6.3 13.3 L13.4 2.5" fill="none" stroke="#72c45a" stroke-width="2.3" stroke-linejoin="round"/></svg><span class="yn">Yes</span></div><div class="hrs" style="left:1138px;top:954px">37h 31m</div><div class="cell" style="left:1450px;top:954px"><svg class="ic x" width="16" height="16" viewBox="0 0 16 16"><path d="M3 3 L13 13 M13 3 L3 13" fill="none" stroke="#e25252" stroke-width="2.3"/></svg><span class="yn no">No</span></div><div class="cell" style="left:1764px;top:954px"><svg class="ic" width="16" height="16" viewBox="0 0 16 16"><path d="M2 7.5 L6.3 13.3 L13.4 2.5" fill="none" stroke="#72c45a" stroke-width="2.3" stroke-linejoin="round"/></svg><span class="yn">Yes</span></div><div class="cell" style="left:2077px;top:954px"><svg class="ic" width="16" height="16" viewBox="0 0 16 16"><path d="M2 7.5 L6.3 13.3 L13.4 2.5" fill="none" stroke="#72c45a" stroke-width="2.3" stroke-linejoin="round"/></svg><span class="yn">Yes</span></div><div class="row" style="top:1018px"></div><div style="position:absolute;left:46px;top:1029.7px;line-height:0"><svg class="av" width="42" height="42" viewBox="-1 -1 42 42"><defs><clipPath id="c10"><circle cx="20" cy="20" r="18.6"/></clipPath></defs><circle cx="20" cy="20" r="20.6" fill="#fff"/><g clip-path="url(#c10)"><g filter="url(#bl)"><rect width="40" height="40" fill="#2c3222"/>
<ellipse cx="8" cy="12" rx="4" ry="3" fill="#8a9070"/>
<ellipse cx="32" cy="14" rx="4" ry="3" fill="#7a8468"/>
<path d="M10 40 C10 24 12 8 20 8 C28 8 30 24 30 40 Z" fill="#b89062"/>
<path d="M6 34 L12 30 L14 40 L6 40 Z" fill="#d8b890"/>
<ellipse cx="20" cy="19" rx="6.5" ry="9" fill="#d0a888"/>
<path d="M14 40 L16 32 L24 32 L28 40 Z" fill="#1a1210"/></g></g></svg></div><div class="name" style="top:1018px">Rayna Rhiel Madsen</div><div class="eid" style="left:265px;top:1018px">#1007</div><div class="cell" style="left:823px;top:1018px"><svg class="ic" width="16" height="16" viewBox="0 0 16 16"><path d="M2 7.5 L6.3 13.3 L13.4 2.5" fill="none" stroke="#72c45a" stroke-width="2.3" stroke-linejoin="round"/></svg><span class="yn">Yes</span></div><div class="hrs" style="left:1138px;top:1018px">37h 31m</div><div class="cell" style="left:1450px;top:1018px"><svg class="ic" width="16" height="16" viewBox="0 0 16 16"><path d="M2 7.5 L6.3 13.3 L13.4 2.5" fill="none" stroke="#72c45a" stroke-width="2.3" stroke-linejoin="round"/></svg><span class="yn">Yes</span></div><div class="cell" style="left:1764px;top:1018px"><svg class="ic" width="16" height="16" viewBox="0 0 16 16"><path d="M2 7.5 L6.3 13.3 L13.4 2.5" fill="none" stroke="#72c45a" stroke-width="2.3" stroke-linejoin="round"/></svg><span class="yn">Yes</span></div><div class="cell" style="left:2077px;top:1018px"><svg class="ic x" width="16" height="16" viewBox="0 0 16 16"><path d="M3 3 L13 13 M13 3 L3 13" fill="none" stroke="#e25252" stroke-width="2.3"/></svg><span class="yn no">No</span></div><div class="row" style="top:1082px"></div><div style="position:absolute;left:46px;top:1093.7px;line-height:0"><svg class="av" width="42" height="42" viewBox="-1 -1 42 42"><defs><clipPath id="c11"><circle cx="20" cy="20" r="18.6"/></clipPath></defs><circle cx="20" cy="20" r="20.6" fill="#fff"/><g clip-path="url(#c11)"><g filter="url(#bl)"><rect width="40" height="40" fill="#24282c"/>
<path d="M22 26 L40 26 L40 40 L28 40 Z" fill="#92929a"/>
<path d="M4 40 L6 28 C12 26 20 28 26 34 L28 40 Z" fill="#263444"/>
<ellipse cx="20" cy="18" rx="7.5" ry="10" fill="#b08c86"/>
<path d="M12 18 C14 28 18 30 22 30 C16 30 12 26 12 18 Z" fill="#3a2a24"/>
<path d="M12 14 C12 4 30 4 30 12 C26 8 18 8 12 14 Z" fill="#24201e"/></g></g></svg></div><div class="name" style="top:1082px">Chance Vetrovs</div><div class="eid" style="left:231px;top:1082px">#1007</div><div class="cell" style="left:823px;top:1082px"><svg class="ic" width="16" height="16" viewBox="0 0 16 16"><path d="M2 7.5 L6.3 13.3 L13.4 2.5" fill="none" stroke="#72c45a" stroke-width="2.3" stroke-linejoin="round"/></svg><span class="yn">Yes</span></div><div class="hrs red" style="left:1138px;top:1082px">51h 47m</div><div class="cell" style="left:1450px;top:1082px"><svg class="ic" width="16" height="16" viewBox="0 0 16 16"><path d="M2 7.5 L6.3 13.3 L13.4 2.5" fill="none" stroke="#72c45a" stroke-width="2.3" stroke-linejoin="round"/></svg><span class="yn">Yes</span></div><div class="cell" style="left:1764px;top:1082px"><svg class="ic" width="16" height="16" viewBox="0 0 16 16"><path d="M2 7.5 L6.3 13.3 L13.4 2.5" fill="none" stroke="#72c45a" stroke-width="2.3" stroke-linejoin="round"/></svg><span class="yn">Yes</span></div><div class="cell" style="left:2077px;top:1082px"><svg class="ic" width="16" height="16" viewBox="0 0 16 16"><path d="M2 7.5 L6.3 13.3 L13.4 2.5" fill="none" stroke="#72c45a" stroke-width="2.3" stroke-linejoin="round"/></svg><span class="yn">Yes</span></div>
<div class="vline" style="left:806px"></div><div class="vline h" style="left:805.2px"></div><div class="vline" style="left:1119px"></div><div class="vline h" style="left:1118.2px"></div><div class="vline" style="left:1433px"></div><div class="vline h" style="left:1432.2px"></div><div class="vline" style="left:1747px"></div><div class="vline h" style="left:1746.2px"></div><div class="vline" style="left:2060px"></div><div class="vline h" style="left:2059.2px"></div>
<div class="th" style="left:47.5px;top:335.1px;letter-spacing:0.2px">Employee</div><div class="chev" style="left:138.8px;top:341.90000000000003px"><svg width="14" height="8" viewBox="0 0 14 8"><path d="M2 6.5 L7 2 L12 6.5" fill="none" stroke="#d6d6d6" stroke-width="1.8"/></svg></div><div class="th" style="left:824.2px;top:335.3px;letter-spacing:0.17px">Work schedule registered</div><div class="info" style="left:1033.5px;top:335.6px"><svg width="20" height="20" viewBox="0 0 20 20"><circle cx="10" cy="10" r="8.3" fill="none" stroke="#80b3f4" stroke-width="1.7"/><circle cx="10.3" cy="6.6" r="1.15" fill="#80b3f4"/><path d="M10.2 9.3 L9.8 14.2" stroke="#80b3f4" stroke-width="2" stroke-linecap="round"/></svg></div><div class="chev" style="left:1073.8px;top:342.1px"><svg width="14" height="8" viewBox="0 0 14 8"><path d="M2 6.5 L7 2 L12 6.5" fill="none" stroke="#d6d6d6" stroke-width="1.8"/></svg></div><div class="th" style="left:1137.6px;top:335.3px;letter-spacing:0.17px">Avg. Weekly working hours</div><div class="info" style="left:1360.8px;top:335.6px"><svg width="20" height="20" viewBox="0 0 20 20"><circle cx="10" cy="10" r="8.3" fill="none" stroke="#80b3f4" stroke-width="1.7"/><circle cx="10.3" cy="6.6" r="1.15" fill="#80b3f4"/><path d="M10.2 9.3 L9.8 14.2" stroke="#80b3f4" stroke-width="2" stroke-linecap="round"/></svg></div><div class="chev" style="left:1391px;top:342.1px"><svg width="14" height="8" viewBox="0 0 14 8"><path d="M2 6.5 L7 2 L12 6.5" fill="none" stroke="#d6d6d6" stroke-width="1.8"/></svg></div><div class="th" style="left:1451.3px;top:335.3px;letter-spacing:0.3px">Daily break held</div><div class="info" style="left:1585.9px;top:335.6px"><svg width="20" height="20" viewBox="0 0 20 20"><circle cx="10" cy="10" r="8.3" fill="none" stroke="#80b3f4" stroke-width="1.7"/><circle cx="10.3" cy="6.6" r="1.15" fill="#80b3f4"/><path d="M10.2 9.3 L9.8 14.2" stroke="#80b3f4" stroke-width="2" stroke-linecap="round"/></svg></div><div class="chev" style="left:1622px;top:342.1px"><svg width="14" height="8" viewBox="0 0 14 8"><path d="M2 6.5 L7 2 L12 6.5" fill="none" stroke="#d6d6d6" stroke-width="1.8"/></svg></div><div class="th" style="left:1765.0px;top:337.4px;letter-spacing:0.16px">Daily Rest period held</div><div class="info" style="left:1945.6px;top:337.7px"><svg width="20" height="20" viewBox="0 0 20 20"><circle cx="10" cy="10" r="8.3" fill="none" stroke="#80b3f4" stroke-width="1.7"/><circle cx="10.3" cy="6.6" r="1.15" fill="#80b3f4"/><path d="M10.2 9.3 L9.8 14.2" stroke="#80b3f4" stroke-width="2" stroke-linecap="round"/></svg></div><div class="chev" style="left:1980.5px;top:344.2px"><svg width="14" height="8" viewBox="0 0 14 8"><path d="M2 6.5 L7 2 L12 6.5" fill="none" stroke="#d6d6d6" stroke-width="1.8"/></svg></div><div class="th" style="left:2078.7px;top:337.4px;letter-spacing:0.25px">Weekly rest day taken</div><div class="info" style="left:2255.5px;top:337.7px"><svg width="20" height="20" viewBox="0 0 20 20"><circle cx="10" cy="10" r="8.3" fill="none" stroke="#80b3f4" stroke-width="1.7"/><circle cx="10.3" cy="6.6" r="1.15" fill="#80b3f4"/><path d="M10.2 9.3 L9.8 14.2" stroke="#80b3f4" stroke-width="2" stroke-linecap="round"/></svg></div><div class="chev" style="left:2290px;top:344.2px"><svg width="14" height="8" viewBox="0 0 14 8"><path d="M2 6.5 L7 2 L12 6.5" fill="none" stroke="#d6d6d6" stroke-width="1.8"/></svg></div>
<svg id="ann" width="2402" height="1492" viewBox="0 0 2402 1492">
  <rect x="1788.5" y="220.6" width="265" height="105.8" fill="none" stroke="#d6905a" stroke-width="9"/>
  <rect x="2150.5" y="216.5" width="240" height="105.8" fill="none" stroke="#d6905a" stroke-width="9"/>
  <path d="M1456 493.1 L1727 301.4" stroke="#d6905a" stroke-width="6.2"/>
  <path d="M1754.6 282.1 L1715.9 288.3 L1735.8 316.2 Z" fill="#d6905a"/>
  <path d="M1836 493.1 L2107 301.4" stroke="#d6905a" stroke-width="6.2"/>
  <path d="M2134.6 282.1 L2095.9 288.3 L2115.8 316.2 Z" fill="#d6905a"/>
</svg>
</div>
</body></html>
